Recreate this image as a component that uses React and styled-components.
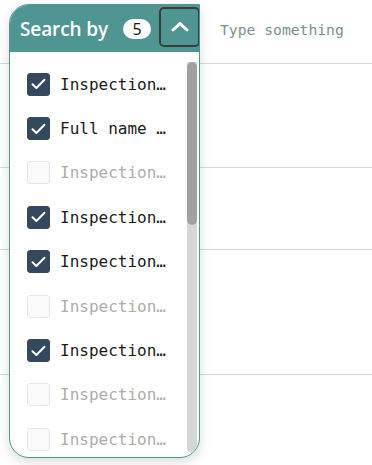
import styled, { createGlobalStyle } from "styled-components";

const GlobalStyle = createGlobalStyle`
  html, body {
    margin: 0;
    padding: 0;
    background: #ffffff;
  }
`;

const teal = "#4f9693";

const items = [
  { label: "Inspection date", checked: true },
  { label: "Full name of inspector", checked: true },
  { label: "Inspection place", checked: false },
  { label: "Inspection type", checked: true },
  { label: "Inspection result", checked: true },
  { label: "Inspection notes", checked: false },
  { label: "Inspection number", checked: true },
  { label: "Inspection status", checked: false },
  { label: "Inspection author", checked: false },
];

const Page = styled.div`
  position: relative;
  width: 372px;
  height: 465px;
  overflow: hidden;
`;

const Table = styled.div`
  display: flex;
  flex-direction: column;
`;

const SearchRow = styled.div`
  display: flex;
  align-items: center;
  padding-left: 220px;
  border-bottom: 1px solid #cfdcda;
  box-sizing: border-box;
  height: 64px;
`;

const SearchInput = styled.input`
  border: none;
  outline: none;
  background: transparent;
  font-family: "DejaVu Sans Mono", "Liberation Mono", monospace;
  font-size: 14.7px;
  color: #333;
  padding: 0;
  margin-top: -4px;
  width: 150px;
  &::placeholder {
    color: #7b8f8e;
  }
`;

const Row = styled.div`
  height: ${(p) => p.$h}px;
  border-bottom: 1px solid #cfdcda;
  box-sizing: border-box;
`;

const Panel = styled.div`
  position: absolute;
  left: 9px;
  top: 4px;
  width: 191px;
  height: 454px;
  box-sizing: border-box;
  border: 1px solid ${teal};
  border-radius: 20px 0 20px 20px;
  background: #ffffff;
  box-shadow: 0 4px 12px rgba(0, 0, 0, 0.14);
  display: flex;
  flex-direction: column;
  overflow: hidden;
`;

const Header = styled.div`
  height: 47px;
  flex: none;
  background: ${teal};
  display: flex;
  align-items: center;
  padding-left: 10px;
  box-sizing: border-box;
`;

const Title = styled.span`
  font-family: "Open Sans", "Noto Sans", sans-serif;
  font-weight: 600;
  font-size: 19px;
  color: #ffffff;
  letter-spacing: -0.1px;
  margin-top: 1px;
`;

const Badge = styled.span`
  margin-left: 15px;
  width: 28px;
  height: 20px;
  border-radius: 10px;
  background: #ffffff;
  color: #111;
  font-family: "Open Sans", "Noto Sans", sans-serif;
  font-size: 16px;
  font-weight: 500;
  display: flex;
  align-items: center;
  justify-content: center;
  margin-top: 1px;
`;

const ToggleButton = styled.button`
  margin-left: auto;
  margin-right: -1px;
  margin-top: -4px;
  width: 41px;
  height: 40px;
  box-sizing: border-box;
  border: 2.5px solid #3b3d3d;
  border-radius: 5px;
  background: ${teal};
  display: flex;
  align-items: center;
  justify-content: center;
  padding: 0;
  cursor: pointer;
`;

const Body = styled.div`
  flex: 1;
  display: flex;
  min-height: 0;
`;

const List = styled.div`
  flex: 1;
  display: flex;
  flex-direction: column;
  padding: 10px 0 0 17px;
`;

const Item = styled.label`
  height: 44.4px;
  flex: none;
  display: flex;
  align-items: center;
  gap: 10px;
`;

const Box = styled.span`
  width: 23px;
  height: 23px;
  box-sizing: border-box;
  border-radius: 3px;
  flex: none;
  display: flex;
  align-items: center;
  justify-content: center;
  background: ${(p) => (p.$checked ? "#34495e" : "#fafafa")};
  border: 1px solid ${(p) => (p.$checked ? "#34495e" : "#e6e6e6")};
`;

const Label = styled.span`
  font-family: "DejaVu Sans Mono", "Liberation Mono", monospace;
  font-size: 16px;
  color: ${(p) => (p.$checked ? "#1a1a1a" : "#acacac")};
  white-space: nowrap;
  overflow: hidden;
  text-overflow: ellipsis;
  max-width: 112px;
`;

const Track = styled.div`
  width: 10px;
  flex: none;
  margin: 10px 2px 4px 0;
  background: #d6d6d6;
  border-radius: 0 0 6px 6px;
  display: flex;
  flex-direction: column;
`;

const Thumb = styled.div`
  height: 163px;
  background: #a1a1a1;
  border-radius: 5px;
`;

const Check = () => (
  <svg width="15" height="12" viewBox="0 0 15 12" fill="none">
    <path d="M1.5 6.3 L5.4 10 L13.5 1.8" stroke="#fff" strokeWidth="2" strokeLinecap="round" strokeLinejoin="round" />
  </svg>
);

const Chevron = () => (
  <svg width="18" height="11" viewBox="0 0 18 11" fill="none">
    <path d="M2 9 L9 2.5 L16 9" stroke="#fff" strokeWidth="3" strokeLinecap="round" strokeLinejoin="round" />
  </svg>
);

export default function App() {
  const count = items.filter((i) => i.checked).length;
  return (
    <Page>
      <GlobalStyle />
      <Table>
        <SearchRow>
          <SearchInput placeholder="Type something" />
        </SearchRow>
        <Row $h={104} />
        <Row $h={82} />
        <Row $h={125} />
      </Table>
      <Panel>
        <Header>
          <Title>Search by</Title>
          <Badge>{count}</Badge>
          <ToggleButton aria-label="Collapse">
            <Chevron />
          </ToggleButton>
        </Header>
        <Body>
          <List>
            {items.map((item) => (
              <Item key={item.label}>
                <Box $checked={item.checked}>{item.checked && <Check />}</Box>
                <Label $checked={item.checked}>{item.label}</Label>
              </Item>
            ))}
          </List>
          <Track>
            <Thumb />
          </Track>
        </Body>
      </Panel>
    </Page>
  );
}
